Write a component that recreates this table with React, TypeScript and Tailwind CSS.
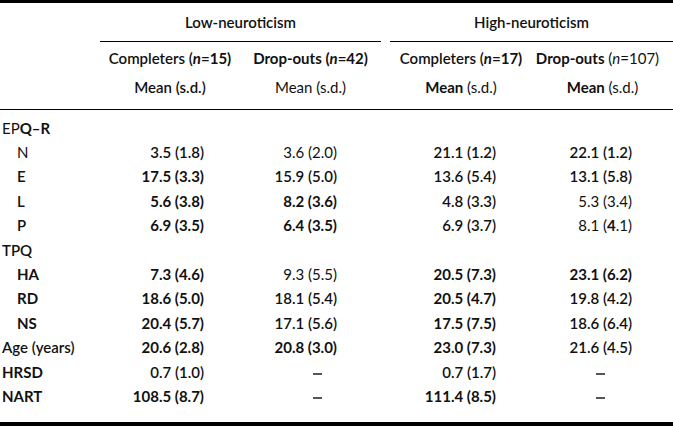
import React from "react";

type W = "r" | "m" | "b";
const wc = (w: W) => (w === "b" ? "font-bold" : w === "m" ? "font-semibold" : "font-normal");

type Row = {
  label: React.ReactNode;
  indent?: boolean;
  lw?: W;
  cells?: [React.ReactNode, W][];
};

const Dash = () => <span className="inline-block w-[9px] h-[2px] bg-[#555] align-middle" />;

const rows: Row[] = [
  {
    label: (
      <>
        EP<span className="font-bold">Q–R</span>
      </>
    ),
    lw: "r",
  },
  { label: "N", indent: true, lw: "r", cells: [["3.5 (1.8)", "m"], ["3.6 (2.0)", "r"], ["21.1 (1.2)", "m"], ["22.1 (1.2)", "m"]] },
  { label: "E", indent: true, lw: "m", cells: [["17.5 (3.3)", "b"], ["15.9 (5.0)", "m"], ["13.6 (5.4)", "m"], ["13.1 (5.8)", "m"]] },
  { label: "L", indent: true, lw: "m", cells: [["5.6 (3.8)", "b"], ["8.2 (3.6)", "b"], ["4.8 (3.3)", "m"], ["5.3 (3.4)", "r"]] },
  {
    label: "P",
    indent: true,
    lw: "m",
    cells: [
      ["6.9 (3.5)", "b"],
      ["6.4 (3.5)", "b"],
      ["6.9 (3.7)", "m"],
      [
        <>
          8.1 (<span className="font-bold">4</span>.1)
        </>,
        "r",
      ],
    ],
  },
  { label: "TPQ", lw: "m" },
  { label: "HA", indent: true, lw: "b", cells: [["7.3 (4.6)", "b"], ["9.3 (5.5)", "r"], ["20.5 (7.3)", "b"], ["23.1 (6.2)", "b"]] },
  { label: "RD", indent: true, lw: "b", cells: [["18.6 (5.0)", "b"], ["18.1 (5.4)", "m"], ["20.5 (4.7)", "b"], ["19.8 (4.2)", "m"]] },
  { label: "NS", indent: true, lw: "b", cells: [["20.4 (5.7)", "b"], ["17.1 (5.6)", "m"], ["17.5 (7.5)", "b"], ["18.6 (6.4)", "m"]] },
  { label: "Age (years)", lw: "m", cells: [["20.6 (2.8)", "b"], ["20.8 (3.0)", "b"], ["23.0 (7.3)", "b"], ["21.6 (4.5)", "m"]] },
  { label: "HRSD", lw: "b", cells: [["0.7 (1.0)", "m"], ["-", "r"], ["0.7 (1.7)", "m"], ["-", "r"]] },
  { label: "NART", lw: "b", cells: [["108.5 (8.7)", "b"], ["-", "r"], ["111.4 (8.5)", "b"], ["-", "r"]] },
];

export default function App() {
  return (
    <div
      className="w-[673px] h-[427px] bg-white text-[#111] text-[15px] leading-none overflow-hidden"
      style={{ fontFamily: "Lato, 'Open Sans', sans-serif" }}
    >
      <div className="h-[3px] bg-black" />
      {/* group headers */}
      <div className="flex h-[38px] items-center">
        <div className="w-[100px]" />
        <div className="w-[281px] text-center font-semibold">Low-neuroticism</div>
        <div className="w-[9px]" />
        <div className="w-[283px] text-center font-semibold">High-neuroticism</div>
      </div>
      <div className="flex">
        <div className="w-[100px]" />
        <div className="w-[281px] h-px bg-black" />
        <div className="w-[9px]" />
        <div className="w-[283px] h-px bg-black" />
      </div>
      {/* subgroup headers */}
      <div className="flex h-[32px] items-center whitespace-nowrap">
        <div className="w-[100px]" />
        <div className="w-[140px] text-center font-semibold">
          Completers (<span className="font-bold italic">n</span>
          <span className="font-bold">=15)</span>
        </div>
        <div className="w-[141px] text-center font-bold">
          Drop-outs (<span className="italic">n</span>=42)
        </div>
        <div className="w-[9px]" />
        <div className="w-[142px] text-center font-semibold">
          Completers (<span className="font-bold italic">n</span>
          <span className="font-bold">=17)</span>
        </div>
        <div className="w-[141px] text-center pr-[10px]">
          <span className="font-bold">Drop-outs</span> (<span className="italic">n</span>=107)
        </div>
      </div>
      <div className="flex h-[26px] items-center whitespace-nowrap">
        <div className="w-[100px]" />
        <div className="w-[140px] text-center font-semibold">Mean (s.d.)</div>
        <div className="w-[141px] text-center">Mean (s.d.)</div>
        <div className="w-[9px]" />
        <div className="w-[142px] text-center">
          <span className="font-bold">Mean</span> (s.d.)
        </div>
        <div className="w-[141px] text-center">
          <span className="font-bold">Mean</span> (s.d.)
        </div>
      </div>
      <div className="h-[9px]" />
      <div className="h-px bg-black" />
      {/* body */}
      <div className="pt-[6px] pb-[13px]">
        {rows.map((r, i) => (
          <div key={i} className="flex h-[24.4px] items-center whitespace-nowrap">
            <div className={`w-[100px] ${r.indent ? "pl-[17px]" : "pl-[2px]"} ${wc(r.lw ?? "r")}`}>{r.label}</div>
            {r.cells && (
              <>
                <div className={`w-[140px] text-right pr-[36px] ${wc(r.cells[0][1])}`}>{r.cells[0][0]}</div>
                <div
                  className={`w-[141px] text-right ${r.cells[1][0] === "-" ? "pr-[59px]" : "pr-[44px]"} ${wc(r.cells[1][1])}`}
                >
                  {r.cells[1][0] === "-" ? <Dash /> : r.cells[1][0]}
                </div>
                <div className="w-[9px]" />
                <div className={`w-[142px] text-right pr-[36px] ${wc(r.cells[2][1])}`}>{r.cells[2][0]}</div>
                <div
                  className={`w-[141px] text-right ${r.cells[3][0] === "-" ? "pr-[68px]" : "pr-[41px]"} ${wc(r.cells[3][1])}`}
                >
                  {r.cells[3][0] === "-" ? <Dash /> : r.cells[3][0]}
                </div>
              </>
            )}
          </div>
        ))}
      </div>
      <div className="h-[4px] bg-black" />
    </div>
  );
}
